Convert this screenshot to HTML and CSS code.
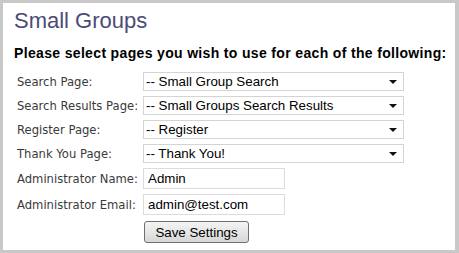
FILE: index.html
```html
<!DOCTYPE html>
<html lang="en">
<head>
    <meta charset="UTF-8">
    <title>Small Groups</title>
    <link rel="stylesheet" href="styles.css">
</head>
<body>

    <div class="panel">
        <h1>Small Groups</h1>
        <h2>Please select pages you wish to use for each of the following:</h2>
        <form class="settings">
            <label for="search">Search Page:</label>
            <div class="select-wrap">
                <select id="search">
                    <option>-- Small Group Search</option>
                </select>
            </div>

            <label for="results">Search Results Page:</label>
            <div class="select-wrap">
                <select id="results">
                    <option>-- Small Groups Search Results</option>
                </select>
            </div>

            <label for="register">Register Page:</label>
            <div class="select-wrap">
                <select id="register">
                    <option>-- Register</option>
                </select>
            </div>

            <label for="thanks">Thank You Page:</label>
            <div class="select-wrap">
                <select id="thanks">
                    <option>-- Thank You!</option>
                </select>
            </div>

            <label for="admin_name">Administrator Name:</label>
            <input type="text" id="admin_name" value="Admin">

            <label for="admin_email">Administrator Email:</label>
            <input type="text" id="admin_email" value="admin@test.com">

            <span></span>
            <div class="actions">
                <button type="button">Save Settings</button>
            </div>
        </form>
    </div>

</body>
</html>
```

FILE: styles.css
```css
* {
    margin: 0;
    padding: 0;
    box-sizing: border-box;
}

body {
    background: #fff;
    width: 459px;
    height: 253px;
}

.panel {
    height: 253px;
    border: 3px solid #c8c8c8;
    border-right-width: 4px;
    padding: 5px 0 0 11px;
    background: #fff;
}

h1 {
    font-family: 'Liberation Sans', Arial, sans-serif;
    font-size: 22px;
    font-weight: normal;
    line-height: 25px;
    color: #4b4b78;
}

h2 {
    margin-top: 12px;
    font-family: 'Liberation Sans', Arial, sans-serif;
    font-size: 14px;
    font-weight: bold;
    line-height: 16px;
    letter-spacing: 0.34px;
    color: #000;
}

.settings {
    display: grid;
    grid-template-columns: 126px auto;
    align-items: center;
    row-gap: 5px;
    margin-top: 11px;
    padding-left: 3px;
}

label {
    font-family: 'DejaVu Sans', Verdana, sans-serif;
    font-size: 11.6px;
    color: #3a3a3a;
}

.select-wrap {
    position: relative;
    width: 261px;
}

.select-wrap::after {
    content: "";
    position: absolute;
    right: 7px;
    top: 8px;
    border-left: 4px solid transparent;
    border-right: 4px solid transparent;
    border-top: 4px solid #111;
    pointer-events: none;
}

select {
    appearance: none;
    -webkit-appearance: none;
    display: block;
    width: 261px;
    height: 19px;
    border: 1px solid #d4d4d4;
    background: #fff;
    padding-left: 2px;
    font-family: 'Liberation Sans', Arial, sans-serif;
    font-size: 13.33px;
    color: #000;
}

input[type="text"] {
    display: block;
    width: 142px;
    height: 21px;
    border: 1px solid #dcdcdc;
    padding-left: 4px;
    font-family: 'Liberation Sans', Arial, sans-serif;
    font-size: 13.33px;
    color: #000;
}

.actions {
    padding-left: 1px;
    margin-top: 1px;
}

button {
    width: 105px;
    height: 22px;
    border: 1px solid #707070;
    border-radius: 3px;
    background: linear-gradient(#f4f4f4, #e6e6e6 50%, #d6d6d6);
    font-family: 'Liberation Sans', Arial, sans-serif;
    font-size: 13.33px;
    color: #000;
}
```
